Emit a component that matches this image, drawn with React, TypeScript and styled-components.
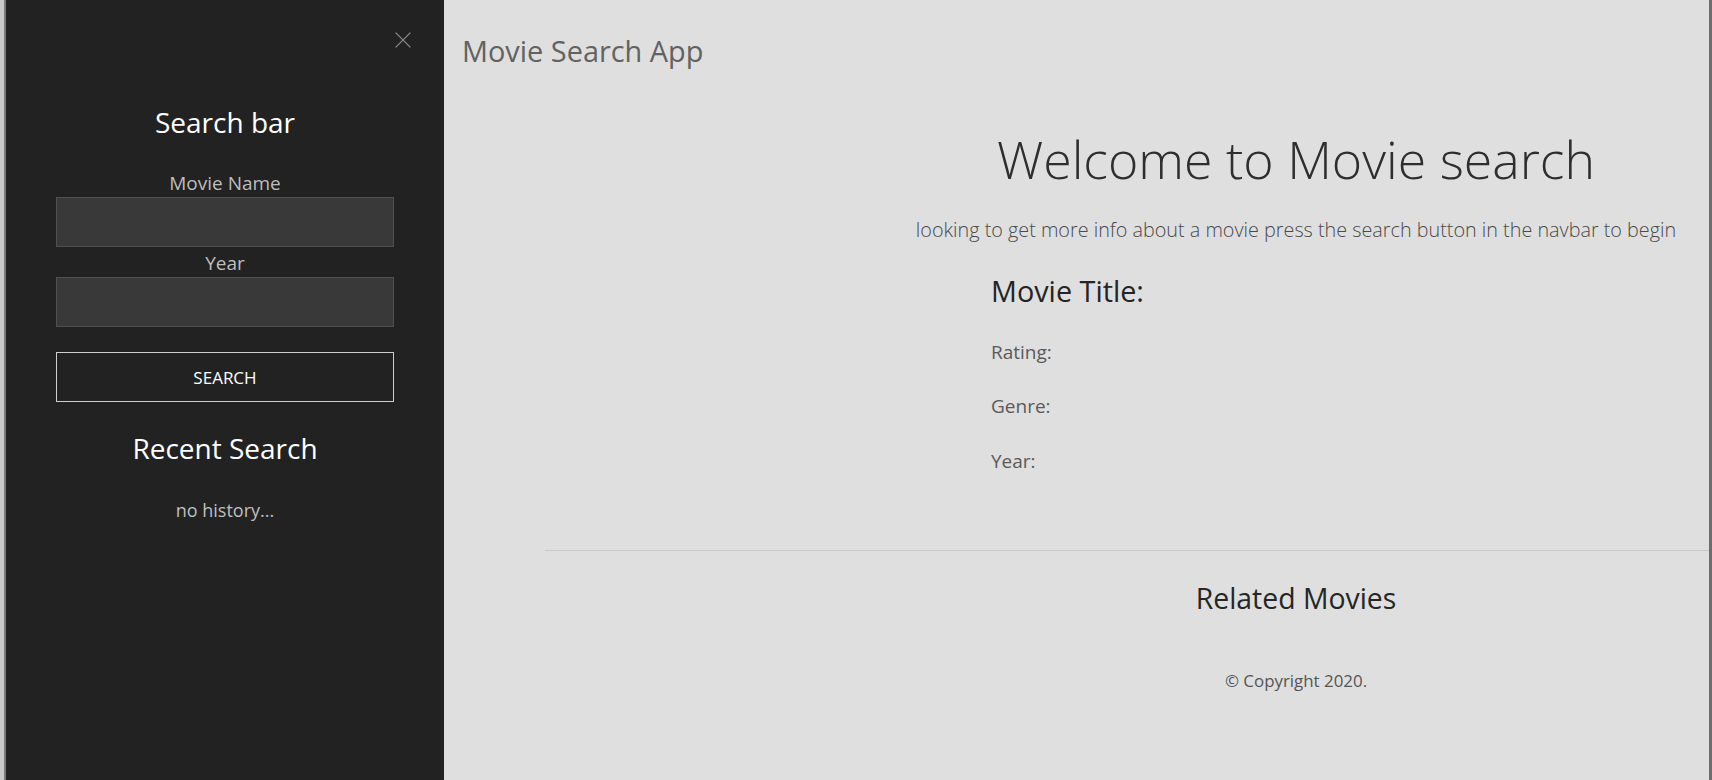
import React from "react";
import styled, { createGlobalStyle } from "styled-components";

const GlobalStyle = createGlobalStyle`
  html, body {
    margin: 0;
    padding: 0;
    height: 100%;
    background: #dfdfdf;
  }
  body {
    font-family: "Open Sans", "Noto Sans", "Liberation Sans", sans-serif;
    -webkit-font-smoothing: antialiased;
  }
  #root { height: 100%; }
  * { box-sizing: border-box; }
`;

const Page = styled.div`
  display: flex;
  height: 780px;
  overflow: hidden;
  border-left: 4px solid #c9c9c9;
  border-right: 3px solid #6d6d6d;
  background: #dfdfdf;
`;

const Sidebar = styled.aside`
  width: 440px;
  flex-shrink: 0;
  background: #222222;
  border-left: 2px solid #7b7b7b;
  display: flex;
  flex-direction: column;
  align-items: center;
`;

const CloseRow = styled.div`
  align-self: stretch;
  display: flex;
  justify-content: flex-end;
  padding: 32px 33px 0 0;
`;

const CloseButton = styled.button`
  width: 16px;
  height: 16px;
  padding: 0;
  border: none;
  background: transparent;
  display: block;
  cursor: pointer;
  svg { display: block; }
`;

const SideHeading = styled.h2<{ $top: number }>`
  margin: ${(p) => p.$top}px 0 0;
  font-size: 28px;
  line-height: 34px;
  font-weight: 400;
  color: #ffffff;
  text-align: center;
`;

const Form = styled.form`
  width: 338px;
  display: flex;
  flex-direction: column;
  align-items: stretch;
`;

const Label = styled.label<{ $top: number }>`
  margin: ${(p) => p.$top}px 0 1px;
  font-size: 19px;
  line-height: 26px;
  color: #bdbdbd;
  text-align: center;
`;

const Input = styled.input`
  height: 50px;
  width: 100%;
  background: #393939;
  border: 1px solid #505050;
  color: #eee;
  font-size: 18px;
  padding: 0 12px;
  outline: none;
  font-family: inherit;
`;

const SearchButton = styled.button`
  margin-top: 25px;
  height: 50px;
  width: 100%;
  background: transparent;
  border: 1px solid #cfcfcf;
  color: #ffffff;
  font-family: inherit;
  font-size: 17px;
  text-transform: uppercase;
  display: flex;
  align-items: center;
  justify-content: center;
  cursor: pointer;
`;

const EmptyNote = styled.p`
  margin: 33px 0 0;
  font-size: 18px;
  line-height: 24px;
  color: #bfbfbf;
  text-align: center;
`;

const Main = styled.main`
  flex: 1;
  display: flex;
  flex-direction: column;
  min-width: 0;
`;

const Navbar = styled.nav`
  padding: 33px 18px 0;
`;

const Brand = styled.a`
  display: inline-block;
  font-size: 28.9px;
  line-height: 36px;
  color: #626262;
  text-decoration: none;
`;

const Content = styled.section`
  margin-left: 439px;
  display: flex;
  flex-direction: column;
`;

const Hero = styled.div`
  text-align: center;
`;

const Display = styled.h1`
  margin: 60px 0 0;
  font-size: 51.8px;
  line-height: 60px;
  font-weight: 300;
  color: #2e2e2e;
  white-space: nowrap;
`;

const Lead = styled.p`
  margin: 26.5px 0 0;
  font-size: 19.8px;
  line-height: 28px;
  font-weight: 300;
  color: #4a4a4a;
  white-space: nowrap;
`;

const Details = styled.div`
  padding-left: 108px;
  display: flex;
  flex-direction: column;
`;

const MovieTitle = styled.h3`
  margin: 30.6px 0 0;
  font-size: 28.8px;
  line-height: 34px;
  font-weight: 400;
  color: #242424;
`;

const InfoLine = styled.p<{ $top: number }>`
  margin: ${(p) => p.$top}px 0 0;
  font-size: 19px;
  line-height: 26px;
  color: #5a5a5a;
`;

const Divider = styled.hr`
  margin: 76px 0 0 101px;
  border: none;
  border-top: 1px solid #c9c9c9;
  height: 0;
`;

const Footer = styled.footer`
  margin-left: 439px;
  text-align: center;
  display: flex;
  flex-direction: column;
`;

const RelatedHeading = styled.h2`
  margin: 30px 0 0;
  font-size: 28.4px;
  line-height: 34px;
  font-weight: 400;
  color: #262626;
`;

const Copyright = styled.p`
  margin: 55px 0 0;
  font-size: 16.9px;
  line-height: 22px;
  color: #555555;
`;

const CloseIcon = () => (
  <svg width="16" height="16" viewBox="0 0 16 16" fill="none">
    <path d="M0.6 0.6 L15.4 15.4 M15.4 0.6 L0.6 15.4" stroke="#8a8a8a" strokeWidth="1.3" />
  </svg>
);

export default function App() {
  return (
    <>
      <GlobalStyle />
      <Page>
        <Sidebar>
          <CloseRow>
            <CloseButton type="button" aria-label="Close">
              <CloseIcon />
            </CloseButton>
          </CloseRow>
          <SideHeading $top={57}>Search bar</SideHeading>
          <Form onSubmit={(e) => e.preventDefault()}>
            <Label $top={31} htmlFor="movie-name">Movie Name</Label>
            <Input id="movie-name" type="text" />
            <Label $top={3} htmlFor="movie-year">Year</Label>
            <Input id="movie-year" type="text" />
            <SearchButton type="submit">Search</SearchButton>
          </Form>
          <SideHeading $top={29}>Recent Search</SideHeading>
          <EmptyNote>no history...</EmptyNote>
        </Sidebar>
        <Main>
          <Navbar>
            <Brand href="#">Movie Search App</Brand>
          </Navbar>
          <Content>
            <Hero>
              <Display>Welcome to Movie search</Display>
              <Lead>looking to get more info about a movie press the search button in the navbar to begin</Lead>
            </Hero>
            <Details>
              <MovieTitle>Movie Title:</MovieTitle>
              <InfoLine $top={30.6}>Rating:</InfoLine>
              <InfoLine $top={28.5}>Genre:</InfoLine>
              <InfoLine $top={28.5}>Year:</InfoLine>
            </Details>
          </Content>
          <Divider />
          <Footer>
            <RelatedHeading>Related Movies</RelatedHeading>
            <Copyright>© Copyright 2020.</Copyright>
          </Footer>
        </Main>
      </Page>
    </>
  );
}
